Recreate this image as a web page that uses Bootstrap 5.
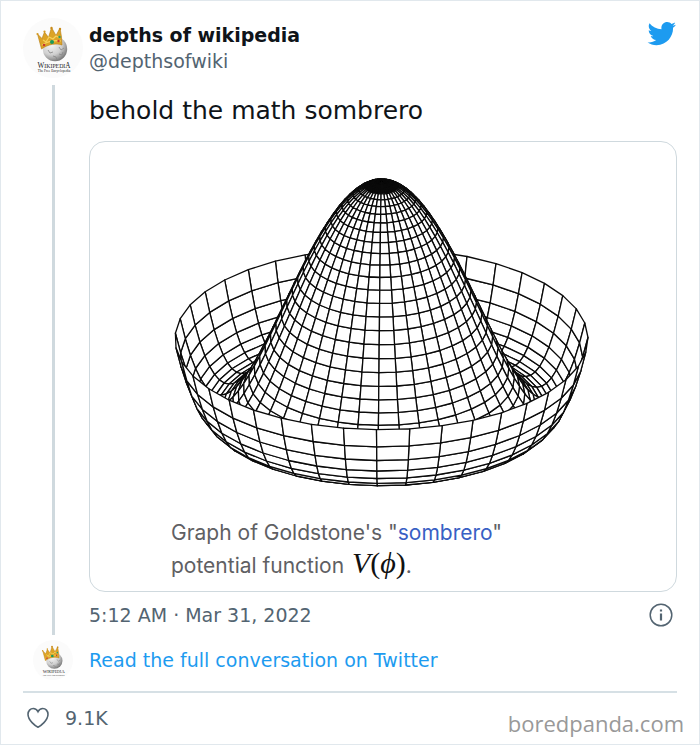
<!DOCTYPE html>
<html lang="en">
<head>
<meta charset="utf-8">
<meta name="viewport" content="width=device-width, initial-scale=1">
<title>depths of wikipedia on Twitter</title>
<link href="https://cdn.jsdelivr.net/npm/bootstrap@5.3.0/dist/css/bootstrap.min.css" rel="stylesheet">
<style>
  body { font-family: "DejaVu Sans", sans-serif; color: #0f1419; background: #fff; }
  .tweet { border: 1px solid #e1e8ed; padding: 17px 22px 0; min-height: 100vh; }
  .rail { width: 60px; flex: none; }
  .rail-line { width: 3px; background: #cfd9de; margin-top: 7px; }
  .tweet-main { padding: 4px 0 7px 6px; }
  .name { font-size: 19px; line-height: 26px; }
  .meta { font-size: 19px; line-height: 26px; color: #536471; }
  .tweet-text { font-size: 25px; line-height: 32px; margin: 21px 0 14px; }
  .media { border: 1px solid #cfd9de; border-radius: 16px; }
  .hat { fill: #fff; stroke: #0a0a0a; stroke-width: 1.3; stroke-linejoin: round; }
  .hat .tip { fill: #0a0a0a; }
  .caption { font: 21px/33px Inter, sans-serif; color: #5f6063; padding: 0 16px 9px 81px; }
  .caption a { color: #3860c4; }
  .formula { font: italic 30px/28px "Liberation Serif", serif; color: #111; padding-left: 2px; }
  .upright { font-style: normal; }
  .stamp { margin-top: 10px; }
  .thread-link { margin-top: 5px; }
  .reply { color: #1d9bf0; font-size: 19px; line-height: 40px; padding-left: 6px; }
  .rule { border-top: 2px solid #d6e0e5; margin-top: 11px; }
  .actions { padding: 12px 0 5px 4px; }
  .icon-btn { border: 0; background: none; padding: 0; }
  .watermark { font: 22px/28px "Open Sans", sans-serif; color: #999; margin-right: -7px; padding-top: 4px; }
</style>
<script src="https://cdn.jsdelivr.net/npm/bootstrap@5.3.0/dist/js/bootstrap.bundle.min.js"></script>
</head>
<body>
<svg width="0" height="0" class="position-absolute" aria-hidden="true">
  <defs>
    <radialGradient id="globe" cx=".35" cy=".3" r=".8">
      <stop offset="0" stop-color="#f7f7f7"/><stop offset=".55" stop-color="#cfcfcf"/><stop offset="1" stop-color="#666"/>
    </radialGradient>
    <symbol id="avatar" viewBox="0 0 60 60">
      <circle cx="30" cy="30" r="30" fill="#fbfbfb"/>
      <circle cx="32" cy="31" r="12.200" fill="url(#globe)"/>
      <path d="M25 32l2 3 3-1M36 29l2 3 3-2M30 38l3 1 1 3M36 36l3 1 1-3" fill="none" stroke="#888" stroke-width=".8"/>
      <g transform="translate(1 2)">
        <path d="M17.500 29L13.500 14l4.500 4.500L20.500 12l4 5.500L27.500 7.500l4.500 8L36 8l1.500 9 .5 8C33 23 24 24 17.500 29z" fill="#dca326" stroke="#b67c12" stroke-width=".6"/>
        <path d="M18 25c5-3 12-5 19-4M19 20l3 2 3-5 4 2 3-3 4 2" fill="none" stroke="#f6d25c" stroke-width="1.200"/>
        <circle cx="13.500" cy="14" r="1.100" fill="#d69a20"/><circle cx="20.500" cy="11.500" r="1.100" fill="#d69a20"/>
        <circle cx="27.500" cy="8" r="1.200" fill="#c98b1a"/><circle cx="36" cy="9" r="1.200" fill="#c98b1a"/>
        <circle cx="28" cy="22" r="2" fill="#199a5c"/><circle cx="20" cy="25" r="1.300" fill="#c8372d"/><circle cx="35.500" cy="17" r="1.200" fill="#2b9c68"/><circle cx="34.500" cy="21" r="1.200" fill="#c8372d"/>
      </g>
      <text x="31" y="50" text-anchor="middle" font-family="Liberation Serif, serif" font-size="5.800" fill="#222"><tspan font-size="7.200">W</tspan>IKIPEDI<tspan font-size="7.200">A</tspan></text>
      <text x="31" y="53.500" text-anchor="middle" font-family="Liberation Serif, serif" font-size="3.500" fill="#222">The Free Encyclopedia</text>
    </symbol>
  </defs>
</svg>

<article class="tweet">
  <div class="d-flex">
    <div class="rail d-flex flex-column align-items-center">
      <svg width="60" height="60" role="img" aria-label="Profile picture"><use href="#avatar"/></svg>
      <div class="rail-line flex-grow-1"></div>
    </div>
    <div class="tweet-main flex-grow-1">
      <header class="d-flex justify-content-between align-items-start">
        <div>
          <div class="name fw-bold">depths of wikipedia</div>
          <div class="meta">@depthsofwiki</div>
        </div>
        <svg width="30" height="30" viewBox="0.500 2.700 24 24" fill="#1d9bf0" overflow="visible" role="img" aria-label="Twitter">
          <path d="M23.643 4.937c-.835.37-1.732.62-2.675.733.962-.576 1.700-1.490 2.048-2.578-.9.534-1.897.922-2.958 1.130-.85-.904-2.060-1.470-3.400-1.470-2.572 0-4.658 2.086-4.658 4.660 0 .364.042.718.120 1.060-3.873-.195-7.304-2.050-9.602-4.868-.4.690-.63 1.490-.63 2.342 0 1.616.823 3.043 2.072 3.878-.764-.025-1.482-.234-2.110-.583v.060c0 2.257 1.605 4.140 3.737 4.568-.392.106-.803.162-1.227.162-.3 0-.593-.028-.877-.082.593 1.850 2.313 3.198 4.352 3.234-1.595 1.250-3.604 1.995-5.786 1.995-.376 0-.747-.022-1.112-.065 2.062 1.323 4.510 2.093 7.140 2.093 8.570 0 13.255-7.098 13.255-13.254 0-.2-.005-.402-.014-.602.910-.658 1.700-1.477 2.323-2.410z"/>
        </svg>
      </header>
      <p class="tweet-text">behold the math sombrero</p>
      <figure class="media mb-0">
        <svg class="d-block w-100" viewBox="0 0 586 374" role="img" aria-label="Wireframe graph of the sombrero potential"><g id="hat" class="hat"></g></svg>
        <figcaption class="caption">Graph of Goldstone's "<a href="#" class="text-decoration-none">sombrero</a>"<br>potential function <span class="formula">V<span class="upright">(</span>ϕ<span class="upright">)</span></span>.</figcaption>
      </figure>
      <div class="meta stamp d-flex justify-content-between align-items-center">
        <time datetime="2022-03-31T05:12">5:12 AM · Mar 31, 2022</time>
        <button class="icon-btn d-flex mx-1" type="button" aria-label="Information">
          <svg width="24" height="24" viewBox="0 0 24 24" fill="none" stroke="#536471"><circle cx="12" cy="12" r="10.800" stroke-width="1.500"/><path d="M12 10.500v7M12 6.500v2" stroke-width="2.200"/></svg>
        </button>
      </div>
    </div>
  </div>
  <div class="thread-link d-flex align-items-center">
    <div class="rail d-flex justify-content-center"><svg width="40" height="40" aria-hidden="true"><use href="#avatar"/></svg></div>
    <a href="#" class="reply text-decoration-none">Read the full conversation on Twitter</a>
  </div>
  <div class="rule"></div>
  <footer class="actions d-flex justify-content-between align-items-start">
    <button class="icon-btn meta d-flex align-items-center gap-3" type="button" aria-label="Like, 9.1K">
      <svg width="22" height="22" viewBox="0 0 22 22" fill="none" stroke="#536471" stroke-width="1.600"><path d="M11 20.200C8.500 19 1 13.500 1 7.300 1 3.900 3.400 1.500 6.200 1.500c2.300 0 3.900 1.300 4.800 3.200.9-1.900 2.500-3.200 4.800-3.200C18.600 1.500 21 3.900 21 7.300c0 6.200-7.500 11.700-10 12.900z"/></svg>
      <span>9.1K</span>
    </button>
    <span class="watermark">boredpanda.com</span>
  </footer>
</article>

<script>
  // Surface of revolution z = peak - A s^2 + B s^4, seen from above at a slant.
  const R = 206.5, tilt = 0.439, up = 0.898, cx = 291.5, cy = 197;
  const B = 560, peak = 157, A = peak + B, rings = 38, spokes = 39, turn = -0.024;
  const height = s => peak - A * s * s + B * s ** 4;
  const point = (s, a) => {
    const r = R * (s + 0.012 * Math.sin(Math.PI * s));
    const x = r * Math.sin(a), front = r * Math.cos(a), h = height(s);
    return { x: cx + x, y: cy - h + front * tilt, d: front * up + h / up * tilt };
  };
  const faces = [];
  for (let i = 0; i < rings; i++) {
    for (let j = 0; j < spokes; j++) {
      const s0 = i / rings, s1 = (i + 1) / rings;
      const a0 = turn + j * 2 * Math.PI / spokes, a1 = turn + (j + 1) * 2 * Math.PI / spokes;
      const p = [point(s0, a0), point(s1, a0), point(s1, a1), point(s0, a1)];
      faces.push({ d: p.reduce((t, q) => t + q.d, 0), p, tip: i < 3 });
    }
  }
  faces.sort((m, n) => m.d - n.d);
  document.getElementById('hat').innerHTML = faces.map(f =>
    '<polygon' + (f.tip ? ' class="tip"' : '') + ' points="' +
    f.p.map(q => q.x.toFixed(1) + ',' + q.y.toFixed(1)).join(' ') + '"/>').join('');
</script>
</body>
</html>
